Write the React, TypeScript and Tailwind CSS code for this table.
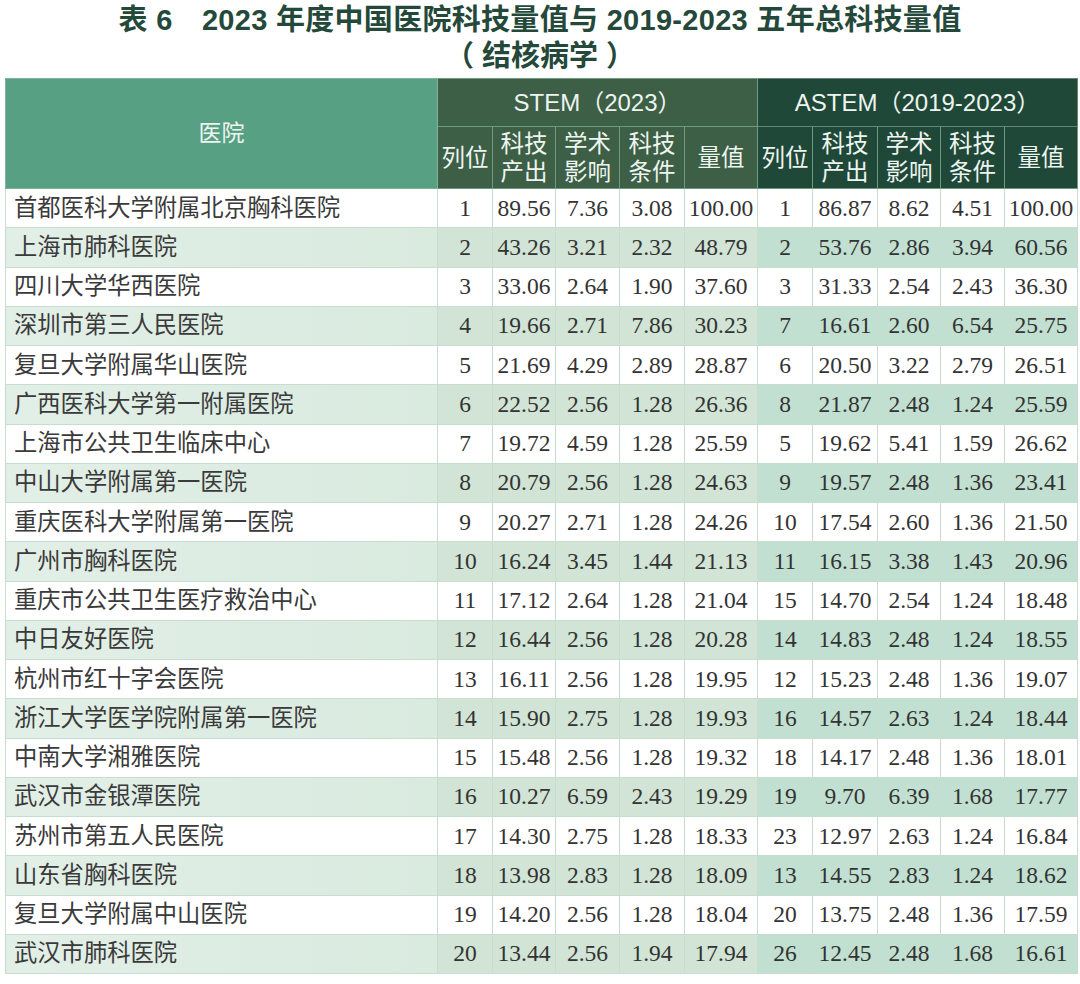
import React from "react";

type Row = {
  name: string;
  stem: [string, string, string, string, string];
  astem: [string, string, string, string, string];
};

const ROWS: Row[] = [
  { name: "首都医科大学附属北京胸科医院", stem: ["1", "89.56", "7.36", "3.08", "100.00"], astem: ["1", "86.87", "8.62", "4.51", "100.00"] },
  { name: "上海市肺科医院", stem: ["2", "43.26", "3.21", "2.32", "48.79"], astem: ["2", "53.76", "2.86", "3.94", "60.56"] },
  { name: "四川大学华西医院", stem: ["3", "33.06", "2.64", "1.90", "37.60"], astem: ["3", "31.33", "2.54", "2.43", "36.30"] },
  { name: "深圳市第三人民医院", stem: ["4", "19.66", "2.71", "7.86", "30.23"], astem: ["7", "16.61", "2.60", "6.54", "25.75"] },
  { name: "复旦大学附属华山医院", stem: ["5", "21.69", "4.29", "2.89", "28.87"], astem: ["6", "20.50", "3.22", "2.79", "26.51"] },
  { name: "广西医科大学第一附属医院", stem: ["6", "22.52", "2.56", "1.28", "26.36"], astem: ["8", "21.87", "2.48", "1.24", "25.59"] },
  { name: "上海市公共卫生临床中心", stem: ["7", "19.72", "4.59", "1.28", "25.59"], astem: ["5", "19.62", "5.41", "1.59", "26.62"] },
  { name: "中山大学附属第一医院", stem: ["8", "20.79", "2.56", "1.28", "24.63"], astem: ["9", "19.57", "2.48", "1.36", "23.41"] },
  { name: "重庆医科大学附属第一医院", stem: ["9", "20.27", "2.71", "1.28", "24.26"], astem: ["10", "17.54", "2.60", "1.36", "21.50"] },
  { name: "广州市胸科医院", stem: ["10", "16.24", "3.45", "1.44", "21.13"], astem: ["11", "16.15", "3.38", "1.43", "20.96"] },
  { name: "重庆市公共卫生医疗救治中心", stem: ["11", "17.12", "2.64", "1.28", "21.04"], astem: ["15", "14.70", "2.54", "1.24", "18.48"] },
  { name: "中日友好医院", stem: ["12", "16.44", "2.56", "1.28", "20.28"], astem: ["14", "14.83", "2.48", "1.24", "18.55"] },
  { name: "杭州市红十字会医院", stem: ["13", "16.11", "2.56", "1.28", "19.95"], astem: ["12", "15.23", "2.48", "1.36", "19.07"] },
  { name: "浙江大学医学院附属第一医院", stem: ["14", "15.90", "2.75", "1.28", "19.93"], astem: ["16", "14.57", "2.63", "1.24", "18.44"] },
  { name: "中南大学湘雅医院", stem: ["15", "15.48", "2.56", "1.28", "19.32"], astem: ["18", "14.17", "2.48", "1.36", "18.01"] },
  { name: "武汉市金银潭医院", stem: ["16", "10.27", "6.59", "2.43", "19.29"], astem: ["19", "9.70", "6.39", "1.68", "17.77"] },
  { name: "苏州市第五人民医院", stem: ["17", "14.30", "2.75", "1.28", "18.33"], astem: ["23", "12.97", "2.63", "1.24", "16.84"] },
  { name: "山东省胸科医院", stem: ["18", "13.98", "2.83", "1.28", "18.09"], astem: ["13", "14.55", "2.83", "1.24", "18.62"] },
  { name: "复旦大学附属中山医院", stem: ["19", "14.20", "2.56", "1.28", "18.04"], astem: ["20", "13.75", "2.48", "1.36", "17.59"] },
  { name: "武汉市肺科医院", stem: ["20", "13.44", "2.56", "1.94", "17.94"], astem: ["26", "12.45", "2.48", "1.68", "16.61"] },
];

const SUB_HEADERS: [string, string | null][] = [
  ["列位", null],
  ["科技", "产出"],
  ["学术", "影响"],
  ["科技", "条件"],
  ["量值", null],
];

const sansCjk = "font-['Liberation_Sans','Noto_Sans_CJK_SC',sans-serif]";
const numFont = "font-['Liberation_Serif','Noto_Sans_CJK_SC',serif]";

function SubHeader({ top, bottom, bg }: { top: string; bottom: string | null; bg: string }) {
  return (
    <th className={`${bg} border border-[#6f9a80] px-0 font-normal text-[23.5px] leading-[28px] text-[#eef4ef]`}>
      {bottom ? (
        <div className="flex flex-col items-center">
          <span>{top}</span>
          <span>{bottom}</span>
        </div>
      ) : (
        top
      )}
    </th>
  );
}

export default function App() {
  return (
    <div className={`w-[1080px] h-[984px] bg-white ${sansCjk}`}>
      <div className="h-[78px] flex flex-col items-center pt-[2px] text-[#24493b] font-bold text-[29px] leading-[36px]">
        <div className="tracking-[0.3px]">表 6　2023 年度中国医院科技量值与 2019-2023 五年总科技量值</div>
        <div>（ 结核病学 ）</div>
      </div>
      <div className="px-[5px]">
        <table className="table-fixed border-collapse w-[1072px]">
          <colgroup>
            <col className="w-[432px]" />
            <col className="w-[55px]" />
            <col className="w-[63px]" />
            <col className="w-[64px]" />
            <col className="w-[65px]" />
            <col className="w-[73px]" />
            <col className="w-[55px]" />
            <col className="w-[65px]" />
            <col className="w-[63px]" />
            <col className="w-[64px]" />
            <col className="w-[73px]" />
          </colgroup>
          <thead>
            <tr className="h-[48px]">
              <th
                rowSpan={2}
                className="bg-[#58a084] border border-[#7fb49a] font-normal text-[23px] text-[#eef5f0] align-middle"
              >
                医院
              </th>
              <th colSpan={5} className="bg-[#3c5f46] border border-[#6f9a80] font-normal text-[24px] text-[#eef4ef]">
                STEM（2023）
              </th>
              <th colSpan={5} className="bg-[#1f4838] border border-[#5f8a72] font-normal text-[24px] text-[#eef4ef]">
                ASTEM（2019-2023）
              </th>
            </tr>
            <tr className="h-[62px]">
              {SUB_HEADERS.map(([t, b], i) => (
                <SubHeader key={`s${i}`} top={t} bottom={b} bg="bg-[#3c5f46]" />
              ))}
              {SUB_HEADERS.map(([t, b], i) => (
                <SubHeader key={`a${i}`} top={t} bottom={b} bg="bg-[#1f4838]" />
              ))}
            </tr>
          </thead>
          <tbody>
            {ROWS.map((row, r) => {
              const shaded = r % 2 === 1;
              return (
                <tr key={row.name} className="h-[39.25px]">
                  <td
                    className={`border border-[#c6ddcf] pl-[8px] text-[23.3px] text-[#3a3a3a] whitespace-nowrap ${
                      shaded ? "bg-gradient-to-r from-[#e2efe7] to-[#d9eadf]" : "bg-white"
                    }`}
                  >
                    {row.name}
                  </td>
                  {row.stem.map((v, i) => (
                    <td
                      key={`s${i}`}
                      className={`border border-[#c6ddcf] text-center text-[23.5px] text-[#333] ${numFont} ${
                        shaded ? "bg-[#d1e4d5]" : "bg-white"
                      }`}
                    >
                      {v}
                    </td>
                  ))}
                  {row.astem.map((v, i) => (
                    <td
                      key={`a${i}`}
                      className={`border border-[#c6ddcf] text-center text-[23.5px] text-[#333] ${numFont} ${
                        shaded ? "bg-[#c2e0d1]" : "bg-white"
                      }`}
                    >
                      {v}
                    </td>
                  ))}
                </tr>
              );
            })}
          </tbody>
        </table>
      </div>
    </div>
  );
}
